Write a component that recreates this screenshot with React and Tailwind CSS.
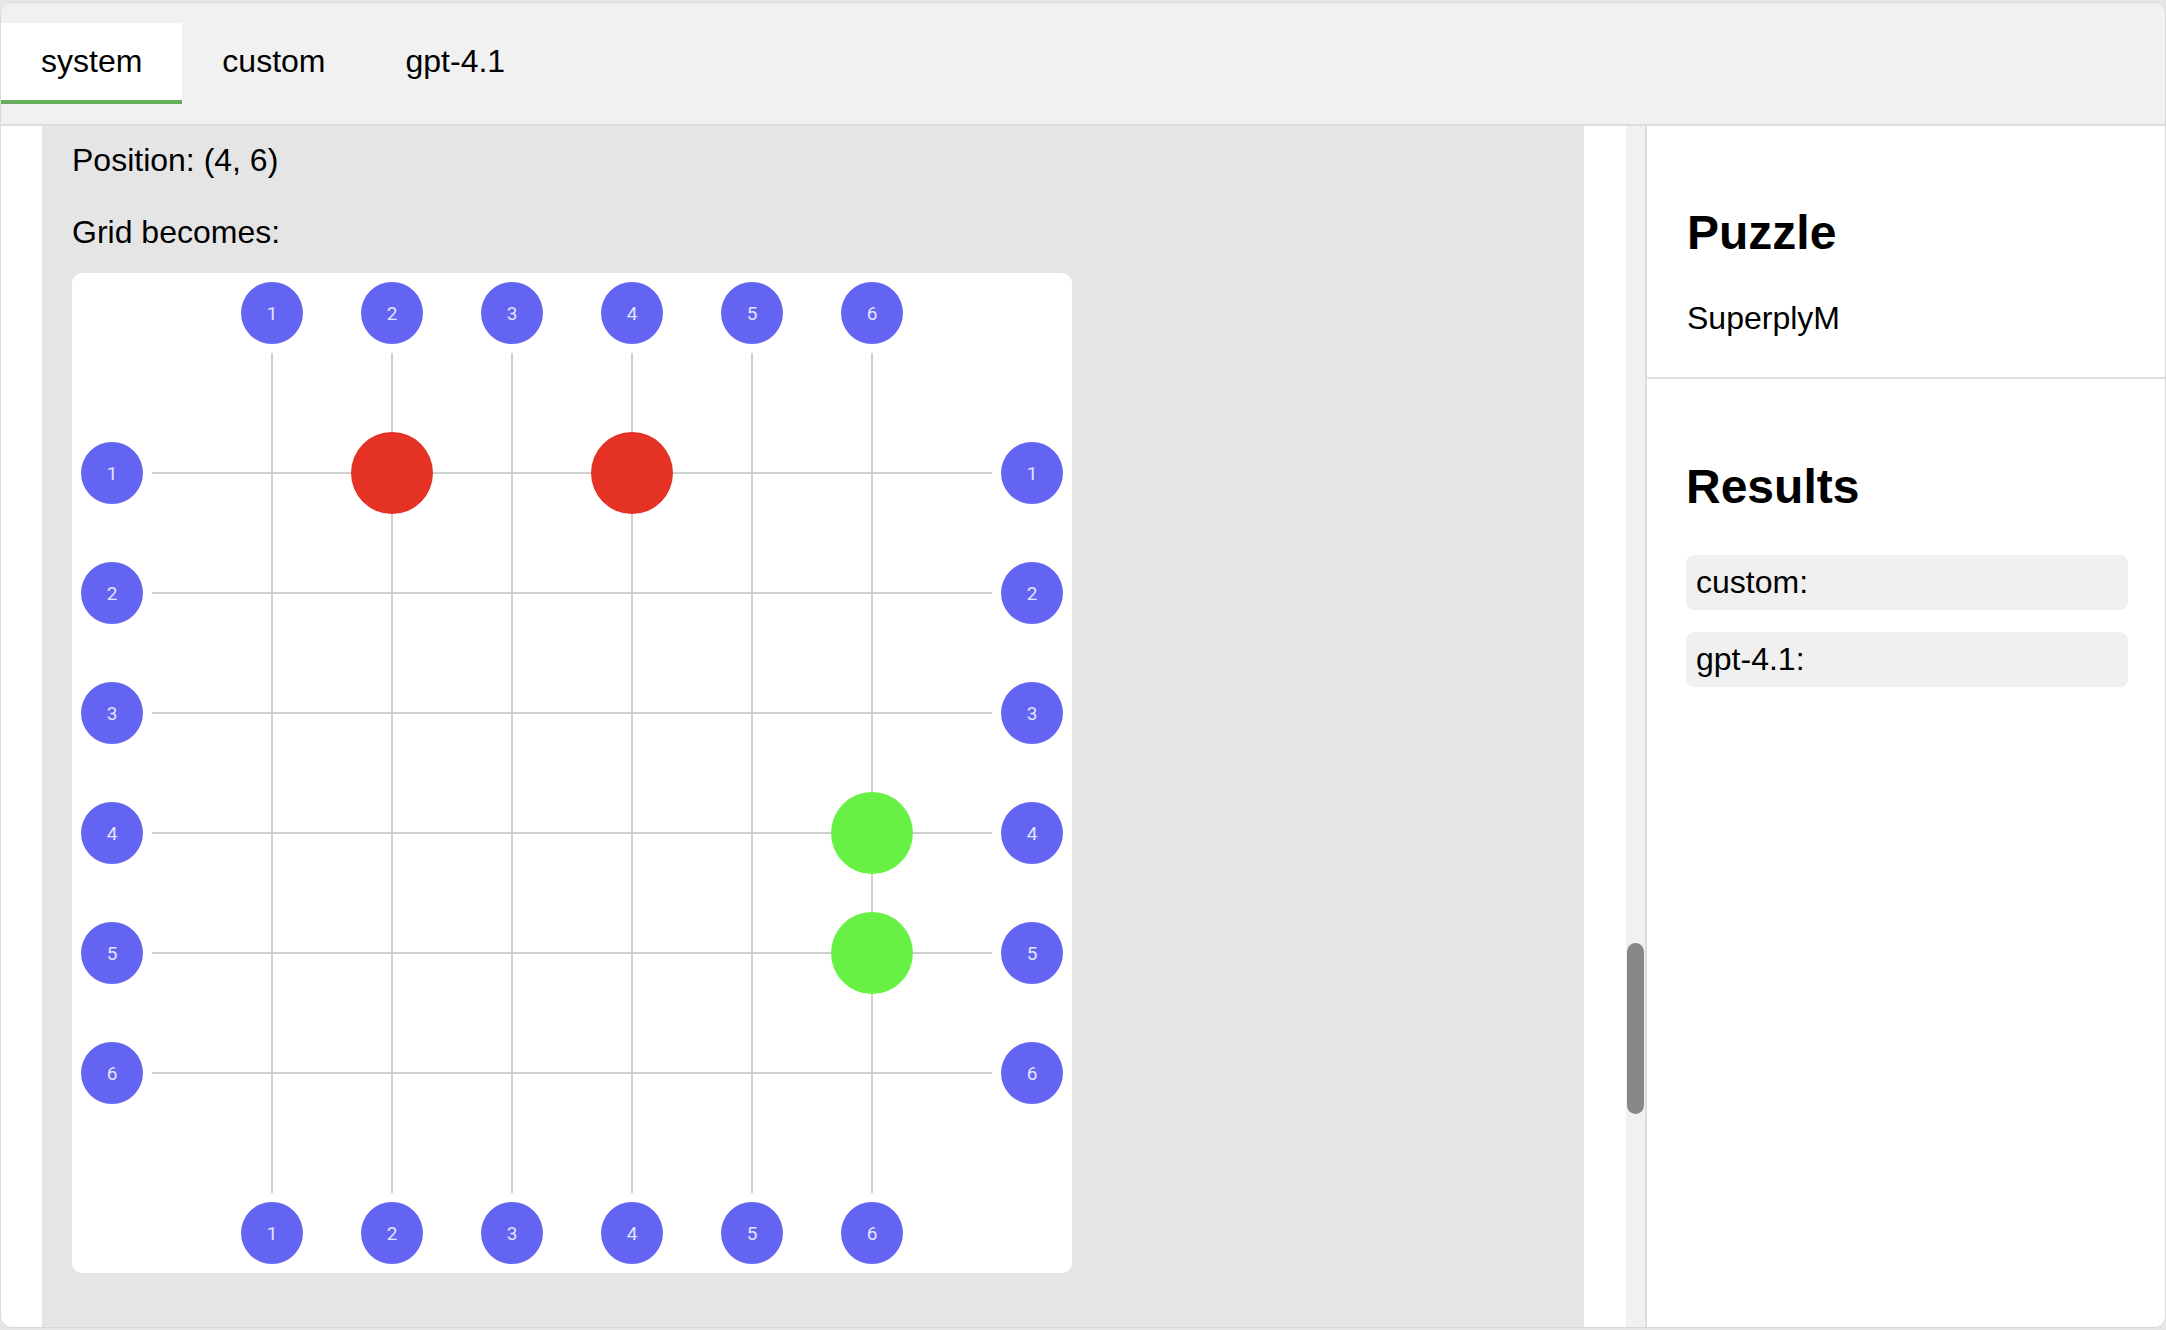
import React from 'react';

const COLS = [1, 2, 3, 4, 5, 6];
const pos = (i) => 200 + 120 * (i - 1);

const reds = [
  [2, 1],
  [4, 1],
];
const greens = [
  [6, 4],
  [6, 5],
];

function Label({ x, y, n }) {
  return (
    <g>
      <circle cx={x} cy={y} r={31} fill="#6464f2" />
      <text
        x={x}
        y={y + 7}
        textAnchor="middle"
        fontSize="19"
        fill="#e4e4ff"
        fontFamily="Roboto, 'Liberation Sans', sans-serif"
      >
        {n}
      </text>
    </g>
  );
}

function Board() {
  return (
    <svg width="1000" height="1000" viewBox="0 0 1000 1000" className="block">
      {COLS.map((i) => (
        <line key={'v' + i} x1={pos(i)} y1={80} x2={pos(i)} y2={920} stroke="#cfcfcf" strokeWidth="2" />
      ))}
      {COLS.map((i) => (
        <line key={'h' + i} x1={80} y1={pos(i)} x2={920} y2={pos(i)} stroke="#cfcfcf" strokeWidth="2" />
      ))}
      {COLS.map((i) => (
        <React.Fragment key={'l' + i}>
          <Label x={pos(i)} y={40} n={i} />
          <Label x={pos(i)} y={960} n={i} />
          <Label x={40} y={pos(i)} n={i} />
          <Label x={960} y={pos(i)} n={i} />
        </React.Fragment>
      ))}
      {reds.map(([c, r]) => (
        <circle key={'r' + c + r} cx={pos(c)} cy={pos(r)} r={41} fill="#e43324" />
      ))}
      {greens.map(([c, r]) => (
        <circle key={'g' + c + r} cx={pos(c)} cy={pos(r)} r={41} fill="#68f145" />
      ))}
    </svg>
  );
}

export default function App() {
  const tabs = ['system', 'custom', 'gpt-4.1'];
  return (
    <div
      className="w-[2166px] h-[1330px] bg-[#e6e6e6] pt-[2px] pb-[2px] text-black"
      style={{ fontFamily: "'Liberation Sans', Arial, sans-serif" }}
    >
      <div className="h-full border border-[#d9d9d9] rounded-[12px] overflow-hidden bg-white flex flex-col">
        {/* tab bar */}
        <div className="h-[123px] shrink-0 bg-[#f1f1f1] border-b-2 border-[#dddddd] pt-[20px] flex items-start">
          {tabs.map((t, i) => (
            <div
              key={t}
              className={
                i === 0
                  ? 'px-[40px] pt-[20px] pb-[20px] text-[32px] leading-[37px] bg-white border-b-4 border-[#66ad5b]'
                  : 'px-[40px] pt-[20px] pb-[24px] text-[32px] leading-[37px]'
              }
            >
              {t}
            </div>
          ))}
        </div>

        <div className="flex flex-1 min-h-0">
          {/* left scroll pane */}
          <div className="w-[1644px] shrink-0 flex">
            <div className="pl-[41px] pr-[42px] flex">
              <div className="w-[1542px] bg-[#e5e5e5] pl-[30px] pt-[16px]">
                <p className="text-[32px] leading-[37px]">Position: (4, 6)</p>
                <p className="text-[32px] leading-[37px] mt-[35px]">Grid becomes:</p>
                <div className="mt-[22px] w-[1000px] h-[1000px] bg-white rounded-[10px] overflow-hidden">
                  <Board />
                </div>
              </div>
            </div>
            <div className="w-[19px] bg-[#f1f1f1] pt-[817px] flex justify-center">
              <div className="w-[17px] h-[171px] rounded-full bg-[#888888]" />
            </div>
          </div>

          {/* right panel */}
          <div className="flex-1 border-l-2 border-[#dddddd] bg-white">
            <div className="px-[40px] pt-[40px] pb-[40px] border-b-2 border-[#dddddd]">
              <h2 className="text-[48px] leading-[54px] font-bold mt-[40px] mb-[40px]">Puzzle</h2>
              <p className="text-[32px] leading-[37px]">SuperplyM</p>
            </div>
            <div className="pl-[39px] pr-[37px] pt-[40px]">
              <h2 className="text-[48px] leading-[54px] font-bold mt-[41px] mb-[41px]">Results</h2>
              <div className="flex flex-col gap-[22px]">
                <div className="bg-[#f0f0f0] rounded-[8px] px-[10px] py-[8px] text-[32px] leading-[39px]">custom:</div>
                <div className="bg-[#f0f0f0] rounded-[8px] px-[10px] py-[8px] text-[32px] leading-[39px]">gpt-4.1:</div>
              </div>
            </div>
          </div>
        </div>
      </div>
    </div>
  );
}
